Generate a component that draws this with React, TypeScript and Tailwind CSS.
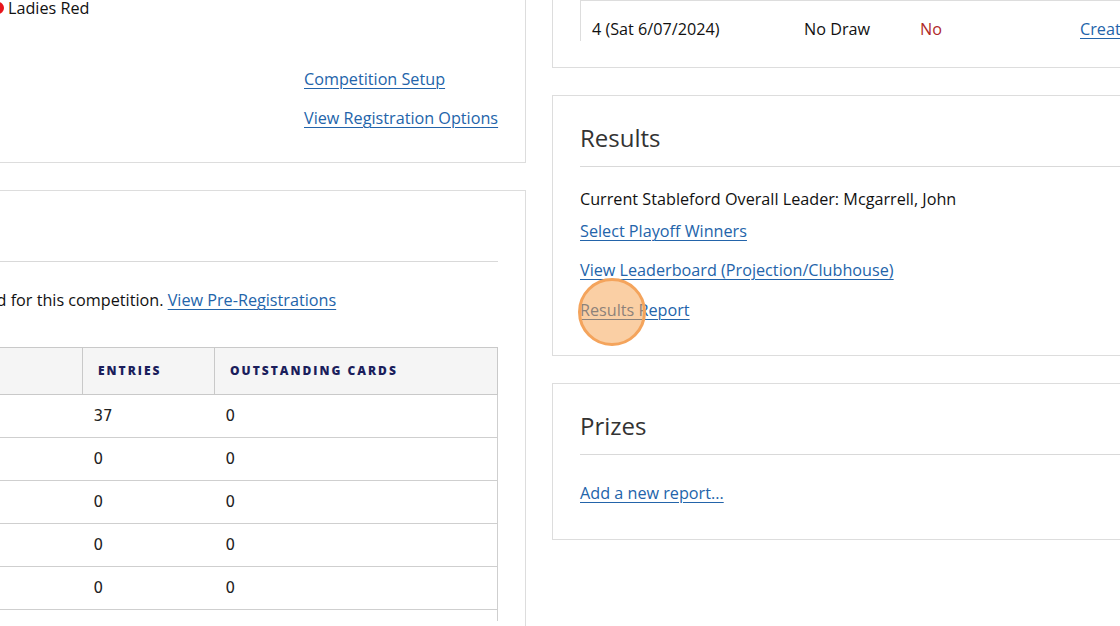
import React from 'react';

const link = 'text-[#2364aa] underline underline-offset-[3px] decoration-1';

const rows = [
  { name: 'Stableford Overall', entries: '37', outstanding: '0' },
  { name: 'Division 1', entries: '0', outstanding: '0' },
  { name: 'Division 2', entries: '0', outstanding: '0' },
  { name: 'Division 3', entries: '0', outstanding: '0' },
  { name: 'Nearest the Pin', entries: '0', outstanding: '0' },
];

function Panel({ children, className = '' }: { children: React.ReactNode; className?: string }) {
  return (
    <section className={`border border-[#dddddd] bg-white px-[27px] ${className}`}>{children}</section>
  );
}

function PanelHeading({ title }: { title: string }) {
  return (
    <>
      <h2 className="text-[24px] leading-[32px] text-[#333333] whitespace-nowrap">{title}</h2>
      <hr className="mt-[12px] border-0 border-t border-[#d9d9d9]" />
    </>
  );
}

export default function App() {
  return (
    <div className="relative h-[626px] w-[1120px] overflow-hidden bg-white font-['Open_Sans',sans-serif] text-[16.2px] text-[#111111]">
      <div className="-ml-[228px] flex items-start gap-[26px]">
        {/* Left column */}
        <div className="-mt-[30px] flex w-[754px] shrink-0 flex-col gap-[27px]">
          <Panel className="pt-[25px] pb-[32px]">
            <div className="flex h-[24px] items-center gap-[4px] pl-[192px] leading-[24px]">
              <span className="size-[12px] rounded-full bg-[#e8141c]" />
              <span>Ladies Red</span>
            </div>
            <div className="mt-[47px] flex flex-col items-start gap-[15px] whitespace-nowrap pl-[504px] leading-[24px]">
              <a href="#" className={link}>Competition Setup</a>
              <a href="#" className={link}>View Registration Options</a>
            </div>
          </Panel>

          <Panel className="h-[700px] pt-[26px]">
            <PanelHeading title="Registrations" />
            <p className="mt-[26px] whitespace-nowrap leading-[24px]">
              Players have pre-registered for this competition.{' '}
              <a href="#" className={link}>View Pre-Registrations</a>
            </p>
            <table className="mt-[35px] w-full border-collapse text-left">
              <thead>
                <tr className="h-[47px] bg-[#f5f5f5]">
                  <th className="w-[282px] border border-[#c9c9c9] px-[15px] text-[12px] font-black tracking-[2px] text-[#1b1e5c]">
                    COMPETITION
                  </th>
                  <th className="w-[132px] border border-[#c9c9c9] px-[15px] text-[12px] font-black tracking-[2px] text-[#1b1e5c]">
                    ENTRIES
                  </th>
                  <th className="border border-[#c9c9c9] px-[15px] text-[12px] font-black tracking-[2px] text-[#1b1e5c]">
                    OUTSTANDING CARDS
                  </th>
                </tr>
              </thead>
              <tbody className="font-['DejaVu_Sans',sans-serif] text-[15px] text-[#222222]">
                {rows.map((r) => (
                  <tr key={r.name} className="h-[43px] border-b border-[#cfcfcf]">
                    <td className="border-l border-[#cfcfcf] px-[11px]">{r.name}</td>
                    <td className="px-[11px]">{r.entries}</td>
                    <td className="border-r border-[#cfcfcf] px-[11px]">{r.outstanding}</td>
                  </tr>
                ))}
                <tr className="h-[11px]">
                  <td className="border-l border-[#cfcfcf]" />
                  <td />
                  <td className="border-r border-[#cfcfcf]" />
                </tr>
              </tbody>
            </table>
          </Panel>
        </div>

        {/* Right column */}
        <div className="-mt-[20px] flex w-[720px] shrink-0 flex-col gap-[27px]">
          <Panel className="pt-[19px] pb-[26px]">
            <div className="h-[41px] overflow-hidden border-l border-t border-[#dddddd]">
              <div className="flex whitespace-nowrap px-[11px] pt-[16px] leading-[24px]">
                <span className="w-[212px]">4 (Sat 6/07/2024)</span>
                <span className="w-[116px]">No Draw</span>
                <span className="w-[160px] text-[#b02a2a]">No</span>
                <a href="#" className={link}>Create Draw</a>
              </div>
            </div>
          </Panel>

          <Panel className="pt-[26px] pb-[33px]">
            <PanelHeading title="Results" />
            <p className="mt-[20px] leading-[24px]">Current Stableford Overall Leader: Mcgarrell, John</p>
            <div className="mt-[8px] leading-[24px]">
              <a href="#" className={link}>Select Playoff Winners</a>
            </div>
            <div className="mt-[15px] leading-[24px]">
              <a href="#" className={link}>View Leaderboard (Projection/Clubhouse)</a>
            </div>
            <div className="mt-[16px] leading-[24px]">
              <span className="relative inline-block">
                <a href="#" className={link}>Results Report</a>
                {/* click highlight */}
                <span className="pointer-events-none absolute -left-[2px] -top-[20px] size-[68px] rounded-full border-[3px] border-[#f4a45c] bg-[#f5a04a]/50" />
              </span>
            </div>
          </Panel>

          <Panel className="pt-[26px] pb-[34px]">
            <PanelHeading title="Prizes" />
            <div className="mt-[26px] leading-[24px]">
              <a href="#" className={link}>Add a new report...</a>
            </div>
          </Panel>
        </div>
      </div>
    </div>
  );
}
